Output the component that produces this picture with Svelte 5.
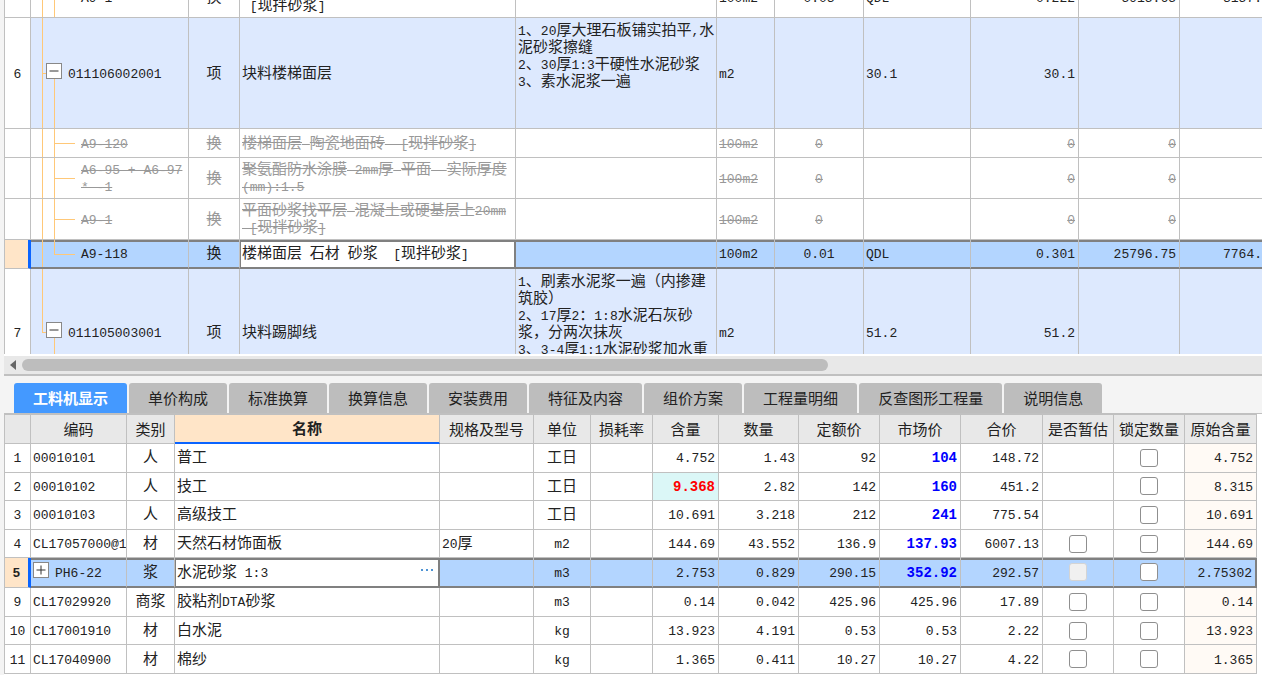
<script lang="ts">
  import { onMount } from "svelte";

  const quotaRows = [
    { no: '', kind: 'leaf', code: 'A9-1', type: '换', name: '平面砂浆找平层 混凝土或硬基层上20mm\n [现拌砂浆]', spec: '', unit: '100m2', rate: '0.03', expr: 'QDL', qty: '0.222', price: '5915.65', total: '3157.', h: 41, state: '' },
    { no: '6', kind: 'open', code: '011106002001', type: '项', name: '块料楼梯面层', spec: '1、20厚大理石板铺实拍平,水\n泥砂浆擦缝\n2、30厚1:3干硬性水泥砂浆\n3、素水泥浆一遍', unit: 'm2', rate: '', expr: '30.1', qty: '30.1', price: '', total: '', h: 111, state: 'item' },
    { no: '', kind: 'leaf', code: 'A9-120', type: '换', name: '楼梯面层 陶瓷地面砖  [现拌砂浆]', spec: '', unit: '100m2', rate: '0', expr: '', qty: '0', price: '0', total: '', h: 29, state: 'void' },
    { no: '', kind: 'leaf', code: 'A6-95 + A6-97\n* -1', type: '换', name: '聚氨酯防水涂膜 2mm厚 平面  实际厚度\n(mm):1.5', spec: '', unit: '100m2', rate: '0', expr: '', qty: '0', price: '0', total: '', h: 41, state: 'void' },
    { no: '', kind: 'leaf', code: 'A9-1', type: '换', name: '平面砂浆找平层 混凝土或硬基层上20mm\n [现拌砂浆]', spec: '', unit: '100m2', rate: '0', expr: '', qty: '0', price: '0', total: '', h: 41, state: 'void' },
    { no: '', kind: 'last', code: 'A9-118', type: '换', name: '楼梯面层 石材 砂浆  [现拌砂浆]', spec: '', unit: '100m2', rate: '0.01', expr: 'QDL', qty: '0.301', price: '25796.75', total: '7764.', h: 29, state: 'sel' },
    { no: '7', kind: 'end', code: '011105003001', type: '项', name: '块料踢脚线', spec: '1、刷素水泥浆一遍（内掺建\n筑胶）\n2、17厚2：1:8水泥石灰砂\n浆，分两次抹灰\n3、3-4厚1:1水泥砂浆加水重', unit: 'm2', rate: '', expr: '51.2', qty: '51.2', price: '', total: '', h: 127, state: 'item' },
  ];
  const quotaCols = [27, 158, 51, 276, 201, 58, 89, 107, 108, 101];

  const tabs = ['工料机显示', '单价构成', '标准换算', '换算信息', '安装费用', '特征及内容', '组价方案', '工程量明细', '反查图形工程量', '说明信息'];
  let activeTab = $state('工料机显示');

  const headers = ['', '编码', '类别', '名称', '规格及型号', '单位', '损耗率', '含量', '数量', '定额价', '市场价', '合价', '是否暂估', '锁定数量', '原始含量'];
  const resourceCols = [27, 96, 48, 265, 94, 57, 62, 66, 80, 81, 81, 82, 71, 71, 72];
  const resources = [
    { no: '1', code: '00010101', type: '人', name: '普工', spec: '', unit: '工日', content: '4.752', qty: '1.43', fixed: '92', market: '104', total: '148.72', est: '', origin: '4.752' },
    { no: '2', code: '00010102', type: '人', name: '技工', spec: '', unit: '工日', content: '9.368', qty: '2.82', fixed: '142', market: '160', total: '451.2', est: '', origin: '8.315', changed: true },
    { no: '3', code: '00010103', type: '人', name: '高级技工', spec: '', unit: '工日', content: '10.691', qty: '3.218', fixed: '212', market: '241', total: '775.54', est: '', origin: '10.691' },
    { no: '4', code: 'CL17057000@1', type: '材', name: '天然石材饰面板', spec: '20厚', unit: 'm2', content: '144.69', qty: '43.552', fixed: '136.9', market: '137.93', total: '6007.13', est: 'on', origin: '144.69' },
    { no: '5', code: 'PH6-22', type: '浆', name: '水泥砂浆 1:3', spec: '', unit: 'm3', content: '2.753', qty: '0.829', fixed: '290.15', market: '352.92', total: '292.57', est: 'off', origin: '2.75302', sel: true },
    { no: '9', code: 'CL17029920', type: '商浆', name: '胶粘剂DTA砂浆', spec: '', unit: 'm3', content: '0.14', qty: '0.042', fixed: '425.96', market: '425.96', total: '17.89', est: 'on', origin: '0.14' },
    { no: '10', code: 'CL17001910', type: '材', name: '白水泥', spec: '', unit: 'kg', content: '13.923', qty: '4.191', fixed: '0.53', market: '0.53', total: '2.22', est: 'on', origin: '13.923' },
    { no: '11', code: 'CL17040900', type: '材', name: '棉纱', spec: '', unit: 'kg', content: '1.365', qty: '0.411', fixed: '10.27', market: '10.27', total: '4.22', est: 'on', origin: '1.365' },
  ];

  // latin runs are set in the narrower mono face
  function runs(text: string) {
    return text.match(/[\x00-\x7f]+|[^\x00-\x7f]+/g) ?? [];
  }

  let viewport: HTMLDivElement;
  onMount(() => {
    viewport.scrollTop = 23;
  });
</script>

{#snippet mixed(text: string)}<span class="txt">{#each runs(text) as run}<span class:latin={run.charCodeAt(0) < 128}>{run}</span>{/each}</span>{/snippet}

<main>
  <div class="viewport" bind:this={viewport}>
    <table class="quota">
      <colgroup>
        {#each quotaCols as w}<col style="width: {w}px" />{/each}
        <col />
      </colgroup>
      <tbody>
        {#each quotaRows as row}
          <tr class={row.state} style="height: {row.h}px">
            <td class="no">{@render mixed(row.no)}</td>
            <td class="tree {row.kind}">
              <i class="trunk"></i><i class="branch"></i><i class="twig"></i>
              <div class="node">
                {#if row.kind == 'open' || row.kind == 'end'}
                  <button class="toggle" aria-label="折叠 {row.code}">
                    <svg width="14" height="14" viewBox="0 0 14 14"><path d="M2.5 7h9" /></svg>
                  </button>
                {/if}
                <div>{@render mixed(row.code)}</div>
              </div>
            </td>
            <td class="mid">{@render mixed(row.type)}</td>
            <td class="name">{@render mixed(row.name)}</td>
            <td class="spec">{@render mixed(row.spec)}</td>
            <td>{@render mixed(row.unit)}</td>
            <td class="mid">{@render mixed(row.rate)}</td>
            <td>{@render mixed(row.expr)}</td>
            <td class="num">{@render mixed(row.qty)}</td>
            <td class="num">{@render mixed(row.price)}</td>
            <td class="num cut">{@render mixed(row.total)}</td>
          </tr>
        {/each}
      </tbody>
    </table>
  </div>

  <div class="scrollbar">
    <button class="arrow" aria-label="向左滚动">
      <svg width="6" height="10" viewBox="0 0 6 10"><path d="M6 0v10L0 5z" /></svg>
    </button>
    <div class="track"><div class="thumb"></div></div>
  </div>

  <div class="tabs" role="tablist">
    {#each tabs as tab}
      <button role="tab" aria-selected={tab == activeTab} class:active={tab == activeTab} onclick={() => activeTab = tab}>{tab}</button>
    {/each}
  </div>

  <div class="detail">
    <table class="resources">
      <colgroup>
        {#each resourceCols as w}<col style="width: {w}px" />{/each}
      </colgroup>
      <thead>
        <tr>
          {#each headers as h}<th class:current={h == '名称'}>{h}</th>{/each}
        </tr>
      </thead>
      <tbody>
        {#each resources as r}
          <tr class:sel={r.sel}>
            <td class="no">{@render mixed(r.no)}</td>
            <td>
              <div class="node">
                {#if r.sel}
                  <button class="toggle" aria-label="展开 {r.code}">
                    <svg width="14" height="14" viewBox="0 0 14 14"><path d="M2.5 7h9M7 2.5v9" /></svg>
                  </button>
                {/if}
                <div>{@render mixed(r.code)}</div>
              </div>
            </td>
            <td class="mid">{@render mixed(r.type)}</td>
            <td class="name">
              <div class="edit">
                <div>{@render mixed(r.name)}</div>
                {#if r.sel}
                  <button class="more" aria-label="选择材料">
                    <svg width="14" height="3" viewBox="0 0 14 3"><path d="M1 0h2v2H1zM6 0h2v2H6zM11 0h2v2h-2z" /></svg>
                  </button>
                {/if}
              </div>
            </td>
            <td>{@render mixed(r.spec)}</td>
            <td class="mid">{@render mixed(r.unit)}</td>
            <td></td>
            <td class="num" class:changed={r.changed}>{@render mixed(r.content)}</td>
            <td class="num">{@render mixed(r.qty)}</td>
            <td class="num">{@render mixed(r.fixed)}</td>
            <td class="num" class:blue={r.market != r.fixed}>{@render mixed(r.market)}</td>
            <td class="num">{@render mixed(r.total)}</td>
            <td class="check">
              {#if r.est}<input type="checkbox" disabled={r.est == 'off'} aria-label="是否暂估 {r.code}" />{/if}
            </td>
            <td class="check"><input type="checkbox" aria-label="锁定数量 {r.code}" /></td>
            <td class="num origin">{@render mixed(r.origin)}</td>
          </tr>
        {/each}
      </tbody>
    </table>
  </div>
</main>

<style>
:global(body) {
  margin: 0;
}

main {
  display: flex;
  flex-direction: column;
  height: 100vh;
  box-sizing: border-box;
  padding-left: 4px;
  overflow: hidden;
  background: #f4f4f4;
  color: #222;
  font: 15px/17px "Noto Sans CJK SC", sans-serif;
}

button {
  font: inherit;
  color: inherit;
  padding: 0;
  border: 0;
  background: none;
}

.txt {
  white-space: pre;
}

.latin {
  font-family: "Liberation Mono", monospace;
  font-size: 13px;
  line-height: 0;
}

table {
  width: 100%;
  table-layout: fixed;
  border-collapse: separate;
  border-spacing: 0;
  background: white;
}

td, th {
  box-sizing: border-box;
  padding: 0 2px 4px;
  border-right: 1px solid #c0c0c0;
  border-bottom: 1px solid #c0c0c0;
  overflow: hidden;
  white-space: nowrap;
}

td:first-child, th:first-child {
  border-left: 1px solid #c0c0c0;
}

.no, .mid {
  text-align: center;
}

.num {
  text-align: right;
  padding-right: 3px;
}

/* upper grid */
.viewport {
  flex: 1;
  min-height: 0;
  overflow: hidden;
  border-bottom: 2px solid white;
}

.item td:not(.no) {
  background: #dde9fe;
}

.void .txt {
  color: #999;
}

.void .txt span {
  text-decoration: line-through;
}

.quota .cut {
  padding-right: 0;
  border-right: 0;
}

.quota .spec {
  vertical-align: top;
  padding-top: 2px;
}

.tree {
  position: relative;
}

.node {
  display: flex;
  align-items: center;
  gap: 6px;
}

.quota .node {
  padding-left: 13px;
}

.leaf .node, .last .node {
  padding-left: 48px;
}

.toggle {
  position: relative;
  display: flex;
  flex: none;
  width: 16px;
  height: 16px;
  box-sizing: border-box;
  border: 1px solid #888;
  background: white;
}

.toggle svg {
  stroke: #333;
}

.tree i {
  position: absolute;
  background: #ffc878;
}

.trunk {
  left: 11px;
  top: 0;
  bottom: -1px;
  width: 1px;
}

.end .trunk {
  bottom: 50%;
}

.branch {
  left: 23px;
  top: 0;
  bottom: -1px;
  width: 1px;
}

.open .branch, .end .branch {
  top: 50%;
}

.last .branch {
  bottom: 50%;
}

.twig {
  left: 23px;
  top: 50%;
  width: 21px;
  height: 1px;
}

.open .twig, .end .twig {
  left: 11px;
  width: 5px;
}

/* selected row in either grid */
.sel td {
  background: #b3d5ff;
  border-bottom: 2px solid #808080;
  box-shadow: inset 0 2px #808080;
}

.sel .no {
  background: #ffe5c8;
  border-right: 3px solid #0a64ff;
  border-bottom: 1px solid #c0c0c0;
  box-shadow: none;
  font-weight: bold;
}

.sel .name {
  background: white;
  border-right: 2px solid #808080;
  box-shadow: inset 1px 2px #808080;
}

.sel .origin {
  border-right: 2px solid #808080;
}

/* scrollbar */
.scrollbar {
  display: flex;
  align-items: center;
  height: 18px;
  background: #e8e8e8;
  border-bottom: 2px solid #c0c0c0;
}

.arrow {
  display: flex;
  justify-content: center;
  width: 18px;
  fill: #666;
}

.track {
  flex: 1;
}

.thumb {
  width: 65%;
  height: 12px;
  border-radius: 6px;
  background: #bdbdbd;
}

/* tabs */
.tabs {
  display: flex;
  gap: 2px;
  padding: 7px 10px 0;
  border-bottom: 1px solid #c0c0c0;
}

.tabs button {
  height: 30px;
  padding: 0 19px 1px;
  border-radius: 3px 3px 0 0;
  background: #bdbdbd;
  white-space: nowrap;
}

.tabs .active {
  background: #4499ff;
  color: white;
  font-weight: bold;
}

/* lower grid */
.detail {
  padding: 0 6px 1px 0;
  background: white;
}

.resources {
  height: 260px;
}

th {
  height: 30px;
  padding: 0 0 2px;
  background: #e8e8e8;
  border-top: 1px solid #c0c0c0;
  font-weight: normal;
}

th.current {
  background: #ffe5c8;
  border-bottom: 2px solid #0a64ff;
  font-weight: bold;
}

.edit {
  display: flex;
  align-items: center;
  justify-content: space-between;
}

.more {
  display: flex;
  padding: 4px 2px;
  fill: #4f94d4;
}

.changed {
  background: #dbf7f7;
  color: #ff0000;
  font-weight: bold;
}

.blue {
  color: #0000ff;
  font-weight: bold;
}

.changed .latin, .blue .latin {
  font-size: 14px;
}

.resources tr:not(.sel) .origin {
  background: #fffaf5;
}

.check {
  padding-bottom: 0;
}

input {
  display: block;
  appearance: none;
  box-sizing: border-box;
  width: 18px;
  height: 18px;
  margin: 0 auto;
  border: 1px solid #8f8f8f;
  border-radius: 3px;
  background: white;
}

input:disabled {
  border-color: #d4d4d4;
  background: #f0f0f0;
}
</style>
